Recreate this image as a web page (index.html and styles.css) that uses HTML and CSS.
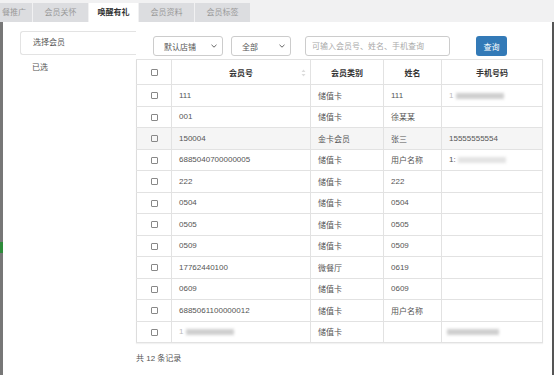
FILE: index.html
```html
<!DOCTYPE html>
<html>
<head>
  <meta charset="utf-8">
  <title>唤醒有礼</title>
  <link rel="stylesheet" href="styles.css">
</head>
<body>
  <!-- Tabs -->
  <div class="tabs">
    <div class="tab tab-cut">餐推广</div>
    <div class="tab">会员关怀</div>
    <div class="tab active">唤醒有礼</div>
    <div class="tab">会员资料</div>
    <div class="tab">会员标签</div>
  </div>

  <div class="main">
    <div class="page-edge"><span class="edge-green"></span></div>

    <!-- Member picker -->
    <div class="modal">
      <ul class="side-menu">
        <li class="menu-item selected">选择会员</li>
        <li class="menu-item">已选</li>
      </ul>

      <div class="content">
        <div class="filters">
          <div class="select select-shop">默认店铺
            <svg class="chev" width="6" height="4" viewBox="0 0 6 4"><path d="M0.5 0.8 L3 3.2 L5.5 0.8" fill="none" stroke="#666" stroke-width="1"/></svg>
          </div>
          <div class="select select-type">全部
            <svg class="chev" width="6" height="4" viewBox="0 0 6 4"><path d="M0.5 0.8 L3 3.2 L5.5 0.8" fill="none" stroke="#666" stroke-width="1"/></svg>
          </div>
          <input type="text" class="search" placeholder="可输入会员号、姓名、手机查询">
          <button class="btn-query">查询</button>
        </div>

        <table class="member-table">
          <colgroup>
            <col style="width:35px">
            <col style="width:139px">
            <col style="width:73px">
            <col style="width:58px">
            <col>
          </colgroup>
          <thead>
            <tr>
              <th><span class="cb"></span></th>
              <th class="sortable">会员号
                <svg class="sort" width="5" height="8" viewBox="0 0 5 8"><path d="M2.5 0.5 L4.5 3 L0.5 3 Z M2.5 7.5 L4.5 5 L0.5 5 Z" fill="#ddd"/></svg>
              </th>
              <th>会员类别</th>
              <th>姓名</th>
              <th>手机号码</th>
            </tr>
          </thead>
          <tbody>
            <tr><td><span class="cb"></span></td><td>111</td><td>储值卡</td><td>111</td><td><span class="peek">1</span><span class="blur"></span></td></tr>
            <tr><td><span class="cb"></span></td><td>001</td><td>储值卡</td><td>徐某某</td><td></td></tr>
            <tr class="hover"><td><span class="cb"></span></td><td>150004</td><td>金卡会员</td><td>张三</td><td>15555555554</td></tr>
            <tr><td><span class="cb"></span></td><td>6885040700000005</td><td>储值卡</td><td>用户名称</td><td>1:<span class="blur light"></span></td></tr>
            <tr><td><span class="cb"></span></td><td>222</td><td>储值卡</td><td>222</td><td></td></tr>
            <tr><td><span class="cb"></span></td><td>0504</td><td>储值卡</td><td>0504</td><td></td></tr>
            <tr><td><span class="cb"></span></td><td>0505</td><td>储值卡</td><td>0505</td><td></td></tr>
            <tr><td><span class="cb"></span></td><td>0509</td><td>储值卡</td><td>0509</td><td></td></tr>
            <tr><td><span class="cb"></span></td><td>17762440100</td><td>微餐厅</td><td>0619</td><td></td></tr>
            <tr><td><span class="cb"></span></td><td>0609</td><td>储值卡</td><td>0609</td><td></td></tr>
            <tr><td><span class="cb"></span></td><td>6885061100000012</td><td>储值卡</td><td>用户名称</td><td></td></tr>
            <tr><td><span class="cb"></span></td><td><span class="peek">1</span><span class="blur"></span></td><td>储值卡</td><td></td><td><span class="blur wide"></span></td></tr>
          </tbody>
        </table>

        <div class="total">共 12 条记录</div>
      </div>
    </div>

    <div class="right-edge"></div>
  </div>
</body>
</html>
```

FILE: styles.css
```css
* {
  box-sizing: border-box;
}

body {
  margin: 0;
  width: 554px;
  height: 375px;
  overflow: hidden;
  font-family: "Liberation Sans", "Noto Sans CJK SC", sans-serif;
  font-size: 8px;
  color: #555;
  background-color: #fff;
  display: flex;
  flex-direction: column;
}

/* Tabs */
.tabs {
  height: 22px;
  background-color: #f1f1f2;
  display: flex;
  align-items: flex-end;
  gap: 1px;
  overflow: hidden;
}

.tab {
  height: 19px;
  width: 55px;
  line-height: 19px;
  text-align: center;
  background-color: #dcdde0;
  color: #999;
  flex-shrink: 0;
}

.tab-cut {
  width: 32px;
  padding-left: 2px;
  text-align: left;
}

.tab.active {
  width: 49px;
  background-color: #fff;
  color: #333;
  font-weight: bold;
}

/* Main area */
.main {
  flex: 1;
  display: flex;
}

.page-edge {
  width: 3px;
  background-color: #777;
  position: relative;
}

.edge-green {
  position: absolute;
  left: 0;
  top: 220px;
  width: 3px;
  height: 11px;
  background-color: #2e8b3a;
}

.right-edge {
  width: 2px;
  background-color: #555;
}

.modal {
  flex: 1;
  display: flex;
  padding: 9px 9px 0 17px;
  background-color: #fff;
}

/* Left menu */
.side-menu {
  list-style: none;
  margin: 0;
  padding: 0;
  width: 116px;
  flex-shrink: 0;
}

.menu-item {
  height: 24px;
  line-height: 24px;
  padding-left: 12px;
  color: #555;
}

.menu-item.selected {
  border: 1px solid #e3e3e3;
  border-right: none;
  border-radius: 3px 0 0 3px;
  line-height: 22px;
}

.menu-item + .menu-item {
  line-height: 26px;
}

/* Content */
.content {
  flex: 1;
  padding-top: 5px;
}

.filters {
  display: flex;
  align-items: center;
  height: 20px;
  padding-left: 17px;
}

.select {
  height: 20px;
  border: 1px solid #ccc;
  border-radius: 3px;
  display: flex;
  align-items: center;
  justify-content: space-between;
  padding: 0 5px 0 10px;
  color: #555;
}

.select-shop {
  width: 70px;
  margin-right: 8px;
}

.select-type {
  width: 60px;
  margin-right: 14px;
}

.search {
  width: 145px;
  height: 20px;
  border: 1px solid #ccc;
  border-radius: 3px;
  padding: 0 6px;
  font-family: inherit;
  font-size: 8px;
  color: #555;
  margin-right: 26px;
}

.search::placeholder {
  color: #aaa;
}

.btn-query {
  width: 31px;
  height: 20px;
  border: none;
  border-radius: 3px;
  background-color: #337ab7;
  color: #fff;
  font-family: inherit;
  font-size: 8px;
  padding: 0;
}

/* Table */
.member-table {
  margin-top: 3px;
  width: 407px;
  border-collapse: collapse;
  table-layout: fixed;
  border: 1px solid #ddd;
  box-shadow: 0 1px 1px rgba(0, 0, 0, 0.05);
}

.member-table th,
.member-table td {
  border: 1px solid #e2e2e2;
  padding: 0 7px;
  white-space: nowrap;
  overflow: hidden;
}

.member-table th {
  height: 25px;
  text-align: center;
  color: #333;
  font-weight: bold;
}

.member-table td {
  height: 21.5px;
  text-align: left;
}

.member-table th:first-child,
.member-table td:first-child {
  text-align: center;
  padding: 0;
  border-left: none;
}

.sortable {
  position: relative;
}

.sort {
  position: absolute;
  right: 4px;
  top: 9px;
}

.member-table tr.hover td {
  background-color: #f5f5f5;
}

.cb {
  display: inline-block;
  width: 7px;
  height: 7px;
  border: 1px solid #888;
  border-radius: 1px;
  vertical-align: middle;
}

.peek {
  color: #bbb;
}

.blur {
  display: inline-block;
  width: 48px;
  height: 6px;
  margin-left: 3px;
  background-color: #cfcfcf;
  filter: blur(1.5px);
  vertical-align: middle;
}

.blur.light {
  background-color: #e3e3e3;
  margin-left: 2px;
}

.blur.wide {
  width: 52px;
  margin-left: -2px;
}

.total {
  margin-top: 9px;
  line-height: 14px;
  color: #555;
}
```
